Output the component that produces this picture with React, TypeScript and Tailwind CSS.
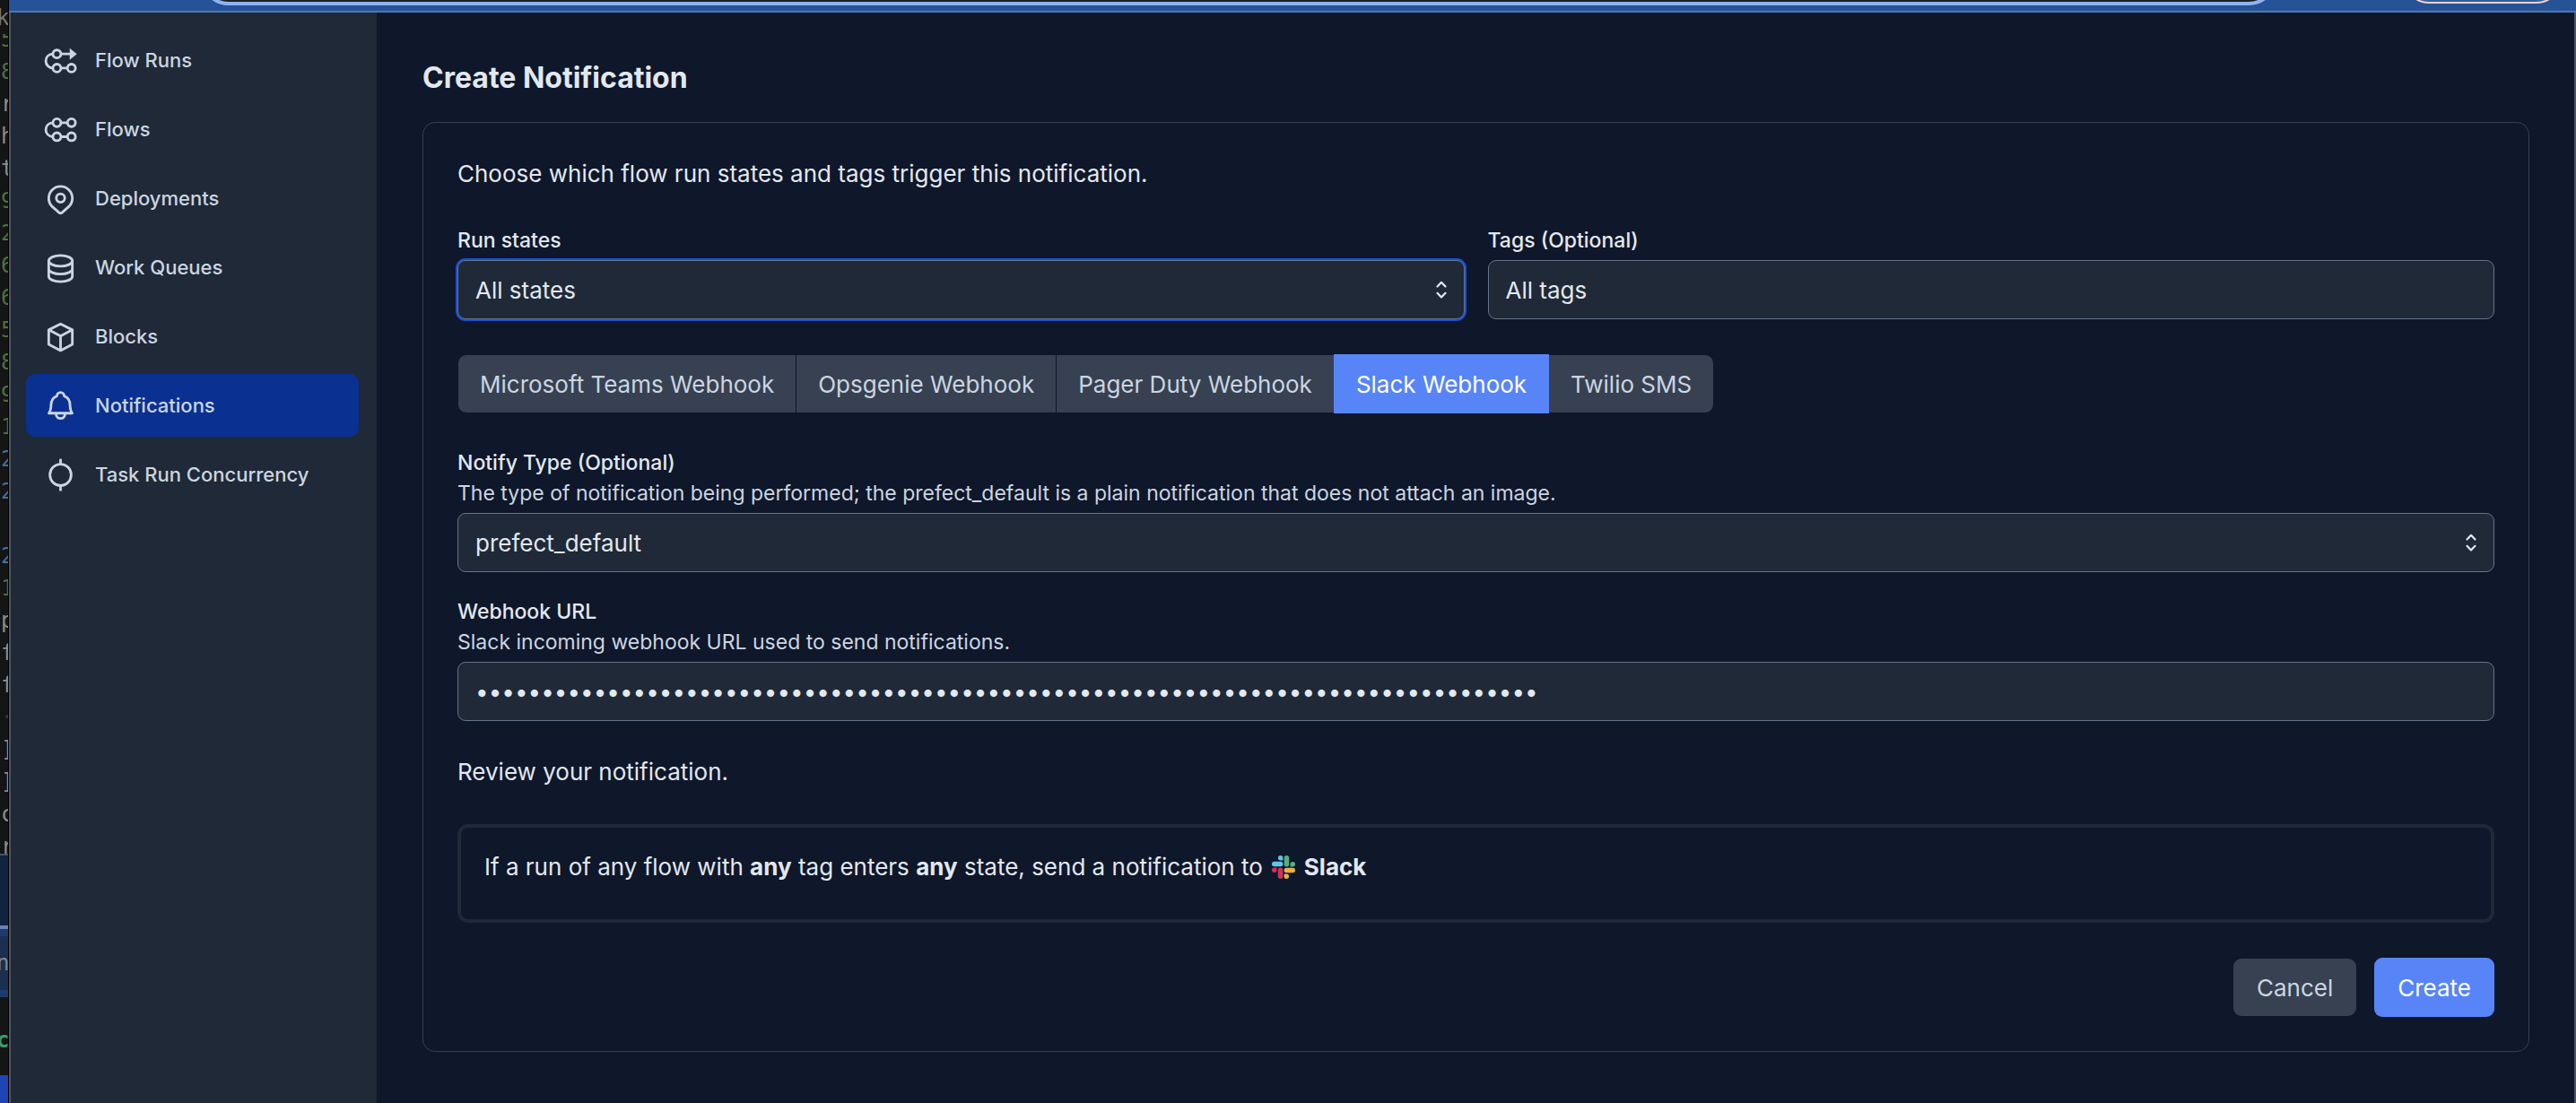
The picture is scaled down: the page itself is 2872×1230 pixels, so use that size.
import { useState, type ReactNode } from "react";

const editorLines: { text: string; tone: string }[] = [
  { text: "5", tone: "text-[#4f6f3d]" },
  { text: "8", tone: "text-[#4f6f3d]" },
  { text: "r", tone: "text-[#8c8c8c]" },
  { text: "h", tone: "text-[#8c8c8c]" },
  { text: "t", tone: "text-[#8c8c8c]" },
  { text: "9", tone: "text-[#4f6f3d]" },
  { text: "2", tone: "text-[#4f6f3d]" },
  { text: "6", tone: "text-[#4f6f3d]" },
  { text: "6", tone: "text-[#4f6f3d]" },
  { text: "5", tone: "text-[#4f6f3d]" },
  { text: "8", tone: "text-[#4f6f3d]" },
  { text: "9", tone: "text-[#4f6f3d]" },
  { text: "1", tone: "text-[#4f6f3d]" },
  { text: "2", tone: "text-[#446f9c]" },
  { text: "2", tone: "text-[#446f9c]" },
  { text: " ", tone: "text-[#8c8c8c]" },
  { text: "2", tone: "text-[#446f9c]" },
  { text: "1", tone: "text-[#4f6f3d]" },
  { text: "p", tone: "text-[#8c8c8c]" },
  { text: "f", tone: "text-[#8c8c8c]" },
  { text: "f", tone: "text-[#8c8c8c]" },
  { text: "·", tone: "text-[#3a3a3a]" },
  { text: "]", tone: "text-[#8c8c8c]" },
  { text: "]", tone: "text-[#8c8c8c]" },
  { text: "c", tone: "text-[#8c8c8c]" },
  { text: "r", tone: "text-[#8c8c8c]" },
];

function EditorSliver() {
  return (
    <div
      aria-hidden="true"
      className="flex w-[10px] shrink-0 flex-col overflow-hidden border-r border-black bg-[#151515] font-['DejaVu_Sans_Mono',monospace] text-2xl"
    >
      <div className="h-[38px] shrink-0 pt-1 leading-8 text-[#777777]">
        <span className="-ml-1">k</span>
      </div>
      <div className="h-[914px] shrink-0 overflow-hidden pl-px">
        <div className="-mt-3">
          {editorLines.map((line, i) => (
            <div key={i} className={`h-9 leading-9 whitespace-pre ${line.tone}`}>
              {line.text}
            </div>
          ))}
        </div>
      </div>
      <div className="h-20 shrink-0 border-t-2 border-[#4a5568] bg-[#11233f]" />
      <div className="h-1 shrink-0 bg-[#6d83b5]" />
      <div className="h-[76px] shrink-0 border-t-8 border-b-8 border-[#1c3c6e] bg-[#1b3050] leading-[60px] text-[#7c8796]">
        <span className="-ml-1">n</span>
      </div>
      <div className="h-[87px] shrink-0 leading-[96px] font-bold text-[#3f9a6a]">
        <span className="-ml-1">c</span>
      </div>
      <div className="grow bg-[#1d45b4]" />
    </div>
  );
}

function Icon({ children }: { children: ReactNode }) {
  return (
    <svg
      viewBox="0 0 24 24"
      aria-hidden="true"
      className="size-[39px] shrink-0 fill-none stroke-current stroke-[1.75]"
      strokeLinejoin="round"
    >
      {children}
    </svg>
  );
}

const navItems: { label: string; icon: ReactNode }[] = [
  {
    label: "Flow Runs",
    icon: (
      <>
        <circle cx="9.5" cy="7.5" r="2.75" />
        <circle cx="9.5" cy="17.2" r="2.75" />
        <circle cx="19.5" cy="17.2" r="2.75" />
        <path d="M12.2 7.5H19M12.2 17.2h4.6M6.800 7.500C3.900 7.700 1.900 9.700 1.900 12.300s2 4.700 4.900 4.900" />
        <path d="M18.300 3.500 23.200 7.500l-4.900 4z" className="fill-current stroke-none" />
      </>
    ),
  },
  {
    label: "Flows",
    icon: (
      <>
        <circle cx="9.5" cy="7.3" r="2.75" />
        <circle cx="19.5" cy="7.3" r="2.75" />
        <circle cx="9.5" cy="16.9" r="2.75" />
        <circle cx="19.5" cy="16.9" r="2.75" />
        <path d="M12.2 7.300h4.600M12.200 16.900h4.600M6.800 7.300C3.900 7.500 1.900 9.500 1.900 12.100s2 4.600 4.900 4.800" />
      </>
    ),
  },
  {
    label: "Deployments",
    icon: (
      <>
        <path d="M6.300 17.500A8.100 8.100 0 1 1 17.700 17.500L13 21.600a1.500 1.500 0 0 1-2 0z" />
        <circle cx="12" cy="11.600" r="2.900" />
      </>
    ),
  },
  {
    label: "Work Queues",
    icon: (
      <>
        <ellipse cx="12" cy="7.300" rx="8.100" ry="3.700" />
        <path d="M3.900 7.300v10.700c0 2 3.600 3.600 8.100 3.600s8.100-1.600 8.100-3.600V7.300M3.900 12.700c0 2 3.600 3.700 8.100 3.700s8.100-1.700 8.100-3.700" />
      </>
    ),
  },
  {
    label: "Blocks",
    icon: <path d="m12 3.200 8.100 4.100v9.900L12 21.500l-8.100-4.300V7.300zM3.900 7.300 12 11.500l8.100-4.200M12 11.500v10" />,
  },
  {
    label: "Notifications",
    icon: (
      <>
        <path d="M4 17.100h16c-1.100-1.500-1.400-3-1.500-5.600-.1-3.200-1.400-5.300-4-6.200a2.500 2.500 0 0 0-5 0c-2.600.9-3.900 3-4 6.200-.1 2.600-.4 4.100-1.500 5.600z" />
        <path d="M8.900 17.600a3.100 3.100 0 0 0 6.200 0" />
      </>
    ),
  },
  {
    label: "Task Run Concurrency",
    icon: (
      <>
        <circle cx="12" cy="12" r="7.300" />
        <path d="M12 1v3.700M12 19.300V23" />
      </>
    ),
  },
];

function Sidebar() {
  return (
    <nav className="flex w-[408px] shrink-0 flex-col gap-[7px] bg-[#1f2937] pt-[18px] pr-5 pl-[17px]">
      {navItems.map((item) => (
        <a
          key={item.label}
          href="#"
          aria-current={item.label === "Notifications" ? "page" : undefined}
          className="flex h-[70px] items-center gap-[19px] rounded-[10px] px-[19px] text-[22px] font-medium text-[#cbd5e1] aria-[current=page]:bg-[#0a3191]"
        >
          <Icon>{item.icon}</Icon>
          {item.label}
        </a>
      ))}
    </nav>
  );
}

function SelectField({ id, value, focused = false }: { id: string; value: string; focused?: boolean }) {
  return (
    <div className="relative">
      <select
        id={id}
        className={`h-[66px] w-full appearance-none rounded-[9px] border border-[#64748b] bg-[#1f2937] px-[19px] text-[26px] text-[#e2e8f0] outline-none ${
          focused ? "ring-2 ring-[#1a4fd8]" : ""
        }`}
      >
        <option>{value}</option>
      </select>
      <svg
        viewBox="0 0 20 20"
        aria-hidden="true"
        className="pointer-events-none absolute inset-y-0 right-[10px] my-auto size-8 fill-none stroke-[#e2e8f0] stroke-[1.4]"
        strokeLinecap="round"
        strokeLinejoin="round"
      >
        <path d="m7.200 7.800 2.800-2.900 2.800 2.900M7.200 12.400l2.800 2.900 2.800-2.900" />
      </svg>
    </div>
  );
}

const labelClass = "text-[23px] leading-8 font-medium text-[#e2e8f0]";
const inputClass =
  "h-[66px] w-full rounded-[9px] border border-[#64748b] bg-[#1f2937] px-[19px] text-[26px] text-[#e2e8f0] outline-none";
const sentenceClass = "text-[26px] leading-[39px] text-[#e2e8f0]";

const channels = [
  "Microsoft Teams Webhook",
  "Opsgenie Webhook",
  "Pager Duty Webhook",
  "Slack Webhook",
  "Twilio SMS",
];

function ChannelGroup() {
  const [active, setActive] = useState("Slack Webhook");
  return (
    <div role="group" aria-label="Notification channel" className="flex">
      {channels.map((name) => (
        <button
          key={name}
          type="button"
          aria-pressed={name === active}
          onClick={() => setActive(name)}
          className="-ml-px h-[66px] border border-[#0f172a] bg-[#374151] px-6 text-[26px] text-[#cbd5e1] first:ml-0 first:rounded-l-[10px] last:rounded-r-[10px] aria-pressed:z-10 aria-pressed:border-[#5785f8] aria-pressed:bg-[#5785f8] aria-pressed:text-white"
        >
          {name}
        </button>
      ))}
    </div>
  );
}

function SlackLogo() {
  return (
    <svg viewBox="0 0 26 26" aria-hidden="true" className="size-[26px]">
      <g fill="#62c4e8">
        <path d="M9.700 0a2.700 2.700 0 1 0 0 5.500h2.700V2.700A2.700 2.700 0 0 0 9.700 0z" />
        <rect x="0" y="6.800" width="12.400" height="5.500" rx="2.700" />
      </g>
      <g fill="#54b07c">
        <path d="M26 9.700a2.700 2.700 0 1 0-5.500 0v2.700h2.700A2.700 2.700 0 0 0 26 9.700z" />
        <rect x="13.700" y="0" width="5.500" height="12.400" rx="2.700" />
      </g>
      <g fill="#e6b145">
        <path d="M16.300 26a2.700 2.700 0 1 0 0-5.500h-2.700v2.800a2.700 2.700 0 0 0 2.700 2.700z" />
        <rect x="13.600" y="13.700" width="12.400" height="5.500" rx="2.700" />
      </g>
      <g fill="#cf3160">
        <path d="M0 16.300a2.700 2.700 0 1 0 5.500 0v-2.700H2.700A2.700 2.700 0 0 0 0 16.300z" />
        <rect x="6.800" y="13.600" width="5.500" height="12.400" rx="2.700" />
      </g>
    </svg>
  );
}

export default function App() {
  return (
    <div className="flex min-h-screen bg-[#0f172a] font-['Inter',sans-serif]">
      <EditorSliver />
      <div className="flex grow flex-col">
        <header className="flex h-[14px] shrink-0 items-end overflow-hidden border-b-2 border-[#5078ae] bg-[#265397] pr-4 pl-[213px]">
          <div className="mr-[141px] mb-[6px] h-16 grow rounded-full border-4 border-[#8eb2f6] bg-[#1f1f1f]" />
          <div className="mb-2 h-14 w-[176px] rounded-full border-2 border-[#f6cdcb] bg-[#30619f]" />
        </header>
        <div className="flex grow border-x-2 border-[#4b5563]">
          <Sidebar />
          <main className="grow pt-[51px] pr-[50px] pb-14 pl-[51px]">
            <h1 className="mb-[27px] text-[32px] leading-[44px] font-bold text-[#e2e8f0]">Create Notification</h1>
            <form
              onSubmit={(e) => e.preventDefault()}
              className="flex flex-col rounded-[14px] border border-[#334155] px-[38px] pt-[37px] pb-[38px]"
            >
              <p className={sentenceClass}>Choose which flow run states and tags trigger this notification.</p>

              <div className="mt-[39px] grid grid-cols-2 gap-[26px]">
                <div className="flex flex-col gap-[6px]">
                  <label htmlFor="states" className={labelClass}>
                    Run states
                  </label>
                  <SelectField id="states" value="All states" focused />
                </div>
                <div className="flex flex-col gap-[6px]">
                  <label htmlFor="tags" className={labelClass}>
                    Tags (Optional)
                  </label>
                  <input id="tags" type="text" defaultValue="All tags" className={inputClass} />
                </div>
              </div>

              <div className="my-[39px]">
                <ChannelGroup />
              </div>

              <div className="flex flex-col gap-7">
                <div className="flex flex-col">
                  <label htmlFor="notify-type" className={labelClass}>
                    Notify Type (Optional)
                  </label>
                  <p className="mt-[2px] mb-[6px] text-[23px] leading-8 text-[#cbd5e1]">
                    The type of notification being performed; the prefect_default is a plain notification that does not
                    attach an image.
                  </p>
                  <SelectField id="notify-type" value="prefect_default" />
                </div>
                <div className="flex flex-col">
                  <label htmlFor="webhook-url" className={labelClass}>
                    Webhook URL
                  </label>
                  <p className="mt-[2px] mb-[6px] text-[23px] leading-8 text-[#cbd5e1]">
                    Slack incoming webhook URL used to send notifications.
                  </p>
                  <input
                    id="webhook-url"
                    type="password"
                    autoComplete="off"
                    defaultValue={"x".repeat(81)}
                    className={inputClass}
                  />
                </div>
              </div>

              <p className={`mt-[37px] mb-[39px] ${sentenceClass}`}>Review your notification.</p>

              <div className="h-[110px] rounded-[12px] border-4 border-[#1f2937] px-[26px] pt-6">
                <p className={`flex items-center gap-[10px] ${sentenceClass}`}>
                  <span>
                    If a run of any flow with <strong>any</strong> tag enters <strong>any</strong> state, send a
                    notification to
                  </span>
                  <SlackLogo />
                  <strong>Slack</strong>
                </p>
              </div>

              <div className="mt-[39px] flex items-center justify-end gap-5">
                <button
                  type="button"
                  className="h-16 rounded-[9px] bg-[#374151] px-[26px] text-[26px] text-[#cbd5e1]"
                >
                  Cancel
                </button>
                <button type="submit" className="h-[66px] rounded-[9px] bg-[#5785f8] px-[26px] text-[26px] text-white">
                  Create
                </button>
              </div>
            </form>
          </main>
        </div>
      </div>
    </div>
  );
}
